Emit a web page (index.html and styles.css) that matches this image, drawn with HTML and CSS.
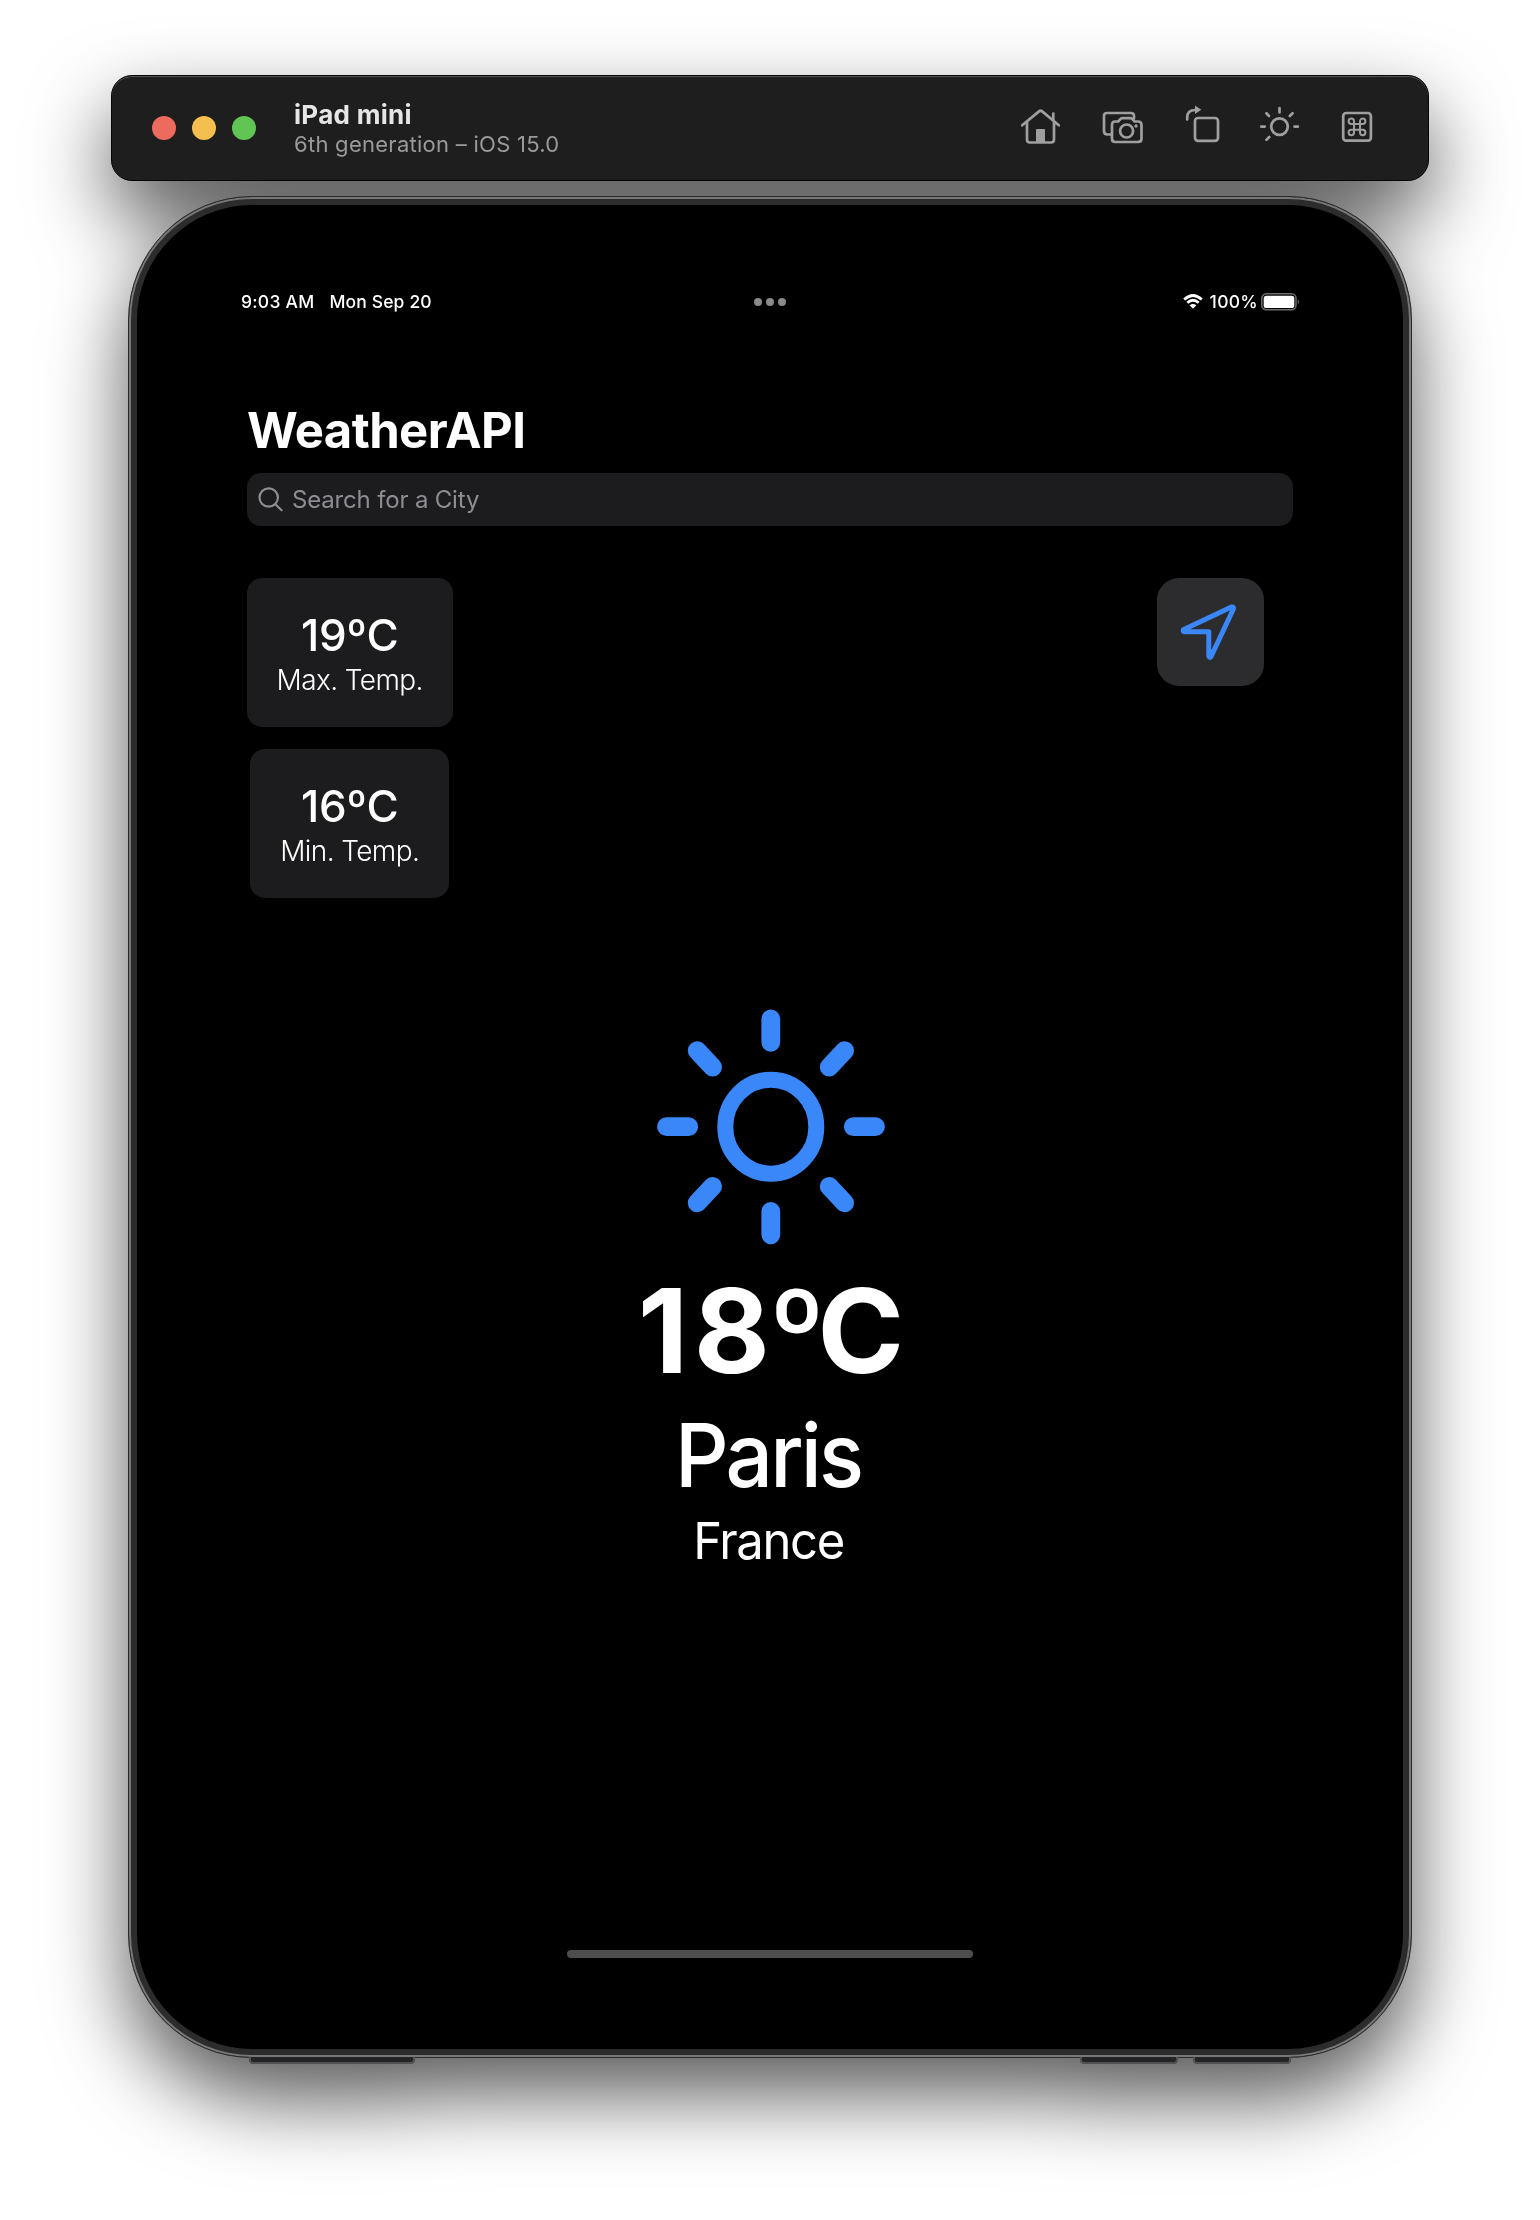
FILE: index.html
```html
<!DOCTYPE html>
<html lang="en">
<head>
<meta charset="utf-8">
<title>WeatherAPI</title>
<link rel="stylesheet" href="styles.css">
</head>
<body>
<div class="simulator">
  <header class="toolbar">
    <div class="lights">
      <span class="light light-close"></span>
      <span class="light light-min"></span>
      <span class="light light-max"></span>
    </div>
    <div class="window-title">
      <div class="device-name"><span>iPad mini</span></div>
      <div class="device-os"><span>6th generation – iOS 15.0</span></div>
    </div>
    <div class="tools">
      <svg class="tool" width="41" height="40" viewBox="1020 108 41 40">
        <path d="M1022.2 125.3 1039 111.4q1.6-1.3 3.2 0l16.6 13.9M1027 121.5v18q0 3 3 3h21q3 0 3-3v-18M1053.3 120v-6.5"/>
        <path class="solid" d="M1036 130q0-1 1-1h7q1 0 1 1v13h-9z"/>
      </svg>
      <svg class="tool" width="42" height="40" viewBox="1102 108 42 40">
        <path d="M1111 134.500h-3.500q-3.500 0-3.500-3.500v-15q0-3 3-3h24q3 0 3 3v2.500"/>
        <path d="M1115 121.500h3.200l2.400-2.600q.8-.8 2-.8h7.600q1.200 0 2 .8l2.400 2.600h3.400q3.500 0 3.500 3.500v13.500q0 3.500-3.500 3.500h-23q-3 0-3-3.500v-13.500q0-3.500 3-3.500z"/>
        <circle cx="1126.600" cy="131" r="6.500"/>
        <circle class="solid" cx="1136" cy="126" r="1.700"/>
      </svg>
      <svg class="tool" width="34" height="40" viewBox="1185 108 34 40">
        <rect x="1195" y="118" width="23" height="22.800" rx="3"/>
        <path d="M1187.200 119.500v-2q0-7.500 8-7.500"/>
        <path class="solid" d="M1195 105.500 1201.300 109.800 1195 114z"/>
      </svg>
      <svg class="tool" width="40" height="40" viewBox="1260 108 40 40">
        <circle cx="1279.500" cy="126.600" r="8.300"/>
        <path d="M1279.500 112.500v-4.500M1289.800 116l2.800-2.700M1294.500 126.600h3.400M1269.300 137l-2.900 2.900M1264.800 126.600h-3.600M1269 116l-2.600-2.700"/>
      </svg>
      <svg class="tool" width="32" height="40" viewBox="1341 108 32 40">
        <rect x="1343.200" y="113" width="27.700" height="27.700" rx="3"/>
        <path class="thin" d="M1354 124v-2.700a2.700 2.700 0 1 0-2.700 2.700h11.400a2.700 2.700 0 1 0-2.700-2.700v11.200a2.700 2.700 0 1 0 2.700-2.700h-11.400a2.700 2.700 0 1 0 2.700 2.700z"/>
      </svg>
    </div>
  </header>

  <div class="device">
    <i class="key key-power"></i>
    <i class="key key-down"></i>
    <i class="key key-up"></i>
    <div class="screen">
      <div class="status">
        <div class="status-side"><span class="clock">9:03 AM</span><span class="date">Mon Sep 20</span></div>
        <div class="dots"><i></i><i></i><i></i></div>
        <div class="status-side status-right">
          <svg class="wifi" width="20" height="15" viewBox="0 0 20 15">
            <path d="M1.200 5.600Q10-2.600 18.800 5.600M4.300 8.700q5.700-5 11.400 0"/>
            <path class="dot" d="M6.600 11.300q3.400-2.700 6.800 0L10 14.800z"/>
          </svg>
          <span class="percent">100%</span>
          <svg class="battery" width="40" height="18" viewBox="0 0 40 18">
            <rect class="shell" x=".8" y=".8" width="34.200" height="16" rx="4.500"/>
            <rect class="charge" x="2.700" y="2.800" width="30.600" height="12.200" rx="2.600"/>
            <path class="cap" d="M36.800 6q2.400 2.900 0 5.800z"/>
          </svg>
        </div>
      </div>

      <h1 class="title"><span>WeatherAPI</span></h1>
      <div class="search">
        <svg width="26" height="26" viewBox="0 0 26 26"><circle cx="10.700" cy="10.500" r="9.200"/><path d="M17.400 17.200 23.600 23.200"/></svg>
        <span>Search for a City</span>
      </div>

      <div class="panel">
        <div class="cards">
          <div class="card card-max"><div class="value"><span>19ºC</span></div><div class="label"><span>Max. Temp.</span></div></div>
          <div class="card card-min"><div class="value"><span>16ºC</span></div><div class="label"><span>Min. Temp.</span></div></div>
        </div>
        <div class="locate">
          <svg width="107" height="108" viewBox="1156.500 578 107 108"><path d="M1182.800 629.800q-.7 2 1.500 2h24v24.500q1 2.200 2.400 0l22.200-47.300q.6-2.600-2-2z"/></svg>
        </div>
      </div>

      <div class="hero">
        <svg class="sun" width="232" height="236" viewBox="654 1009 232 236">
          <ellipse cx="770.800" cy="1126.700" rx="45.500" ry="47"/>
          <path class="rays" d="M770.800 1018.800v23.500M770.800 1211.500v23.300M666.500 1126.700h22.200M853.300 1126.700h22.200M697.200 1050.700l15.400 16.500M844.600 1050.700l-15.400 16.500M697.200 1202.900l15.400-16.500M844.600 1202.900l-15.400-16.500"/>
        </svg>
        <div class="temp"><span><span class="tens">1</span>8<span class="degree">º</span>C</span></div>
        <div class="city"><span>Paris</span></div>
        <div class="country"><span>France</span></div>
      </div>
      <div class="home-bar"></div>
    </div>
  </div>
</div>
</body>
</html>
```
FILE: styles.css
```css
* { box-sizing: border-box; }

body {
  margin: 0;
  background: #fff;
  font-family: Inter, "Liberation Sans", sans-serif;
  color: #fff;
}

span { white-space: nowrap; }

.simulator {
  height: 2220px;
  padding-top: 75px;
  display: flex;
  flex-direction: column;
  align-items: center;
  gap: 15px;
  filter: drop-shadow(0 36px 40px rgba(0, 0, 0, .65));
}

/* simulator title bar */
.toolbar {
  width: 1318px;
  height: 106px;
  padding: 0 55px 0 40px;
  display: flex;
  align-items: center;
  border: 1px solid #050505;
  border-radius: 21px;
  background: #1e1e1e;
  box-shadow: inset 0 1px 0 #555;
}
.lights { display: flex; gap: 16px; }
.light { width: 24px; height: 24px; border-radius: 50%; }
.light-close { background: #ed6a5e; }
.light-min { background: #f5bf4f; }
.light-max { background: #61c554; }
.window-title { margin-left: 38px; flex: 1; padding-top: 3px; }
.device-name { font-size: 26px; line-height: 30px; font-weight: 700; color: #e6e6e6; letter-spacing: .3px; }
.device-os { font-size: 22px; line-height: 29px; color: #9a9a9a; letter-spacing: .27px; }
.tools { display: flex; gap: 41px; align-items: center; }
.tool { overflow: visible; fill: none; stroke: #9f9f9f; stroke-width: 2.700; stroke-linecap: round; stroke-linejoin: round; }
.tool .solid { fill: #9f9f9f; stroke: none; }
.tool .thin { stroke-width: 2; }

/* tablet body: rim, bezel, glass */
.device {
  position: relative;
  width: 1284px;
  height: 1862px;
  padding: 8px;
  border: 1px solid #2b2b2b;
  border-radius: 124px;
  background: #2c2c2c;
  box-shadow: inset 0 0 0 2px #777;
}
.screen {
  height: 100%;
  padding: 76px 110px 91px;
  border-radius: 115px;
  background: #000;
  display: flex;
  flex-direction: column;
}
.key {
  position: absolute;
  top: 1860px;
  height: 7px;
  background: #242426;
  border: 2px solid #505050;
  border-top: 0;
  border-radius: 0 0 4px 4px;
}
.key-power { left: 120px; width: 166px; }
.key-down { left: 951px; width: 98px; }
.key-up { left: 1064px; width: 98px; }

.status {
  height: 40px;
  display: grid;
  grid-template-columns: 1fr auto 1fr;
  align-items: center;
  font-size: 17.500px;
  font-weight: 500;
  margin: 0 -8px 0 -6px;
}
.status-side { display: flex; align-items: center; }
.status-right { justify-content: flex-end; }
.clock { letter-spacing: .25px; }
.date { margin-left: 15px; letter-spacing: .15px; }
.percent { letter-spacing: .3px; }
.dots { display: flex; gap: 4px; margin: 2px 2px 0 0; }
.dots i { width: 8px; height: 8px; border-radius: 50%; background: #8a8a8a; }
.wifi { fill: none; stroke: #fff; stroke-width: 2.800; margin-right: 7px; }
.wifi .dot { fill: #fff; stroke: none; }
.battery { margin: 1px 0 0 3px; }
.shell { fill: none; stroke: #6b6b6b; stroke-width: 1.500; }
.charge { fill: #fff; }
.cap { fill: #6b6b6b; }

.title { margin: 80px 0 0; font-size: 49px; line-height: 60px; font-weight: 700; letter-spacing: -.6px; }
.search {
  margin-top: 12px;
  height: 53px;
  padding-left: 11px;
  display: flex;
  align-items: center;
  gap: 8px;
  border-radius: 14px;
  background: #1c1c1e;
  color: #8d8d93;
  font-size: 24px;
  letter-spacing: -.17px;
}
.search svg { fill: none; stroke: #8d8d93; stroke-width: 2.200; stroke-linecap: round; }

.panel { margin-top: 52px; padding-right: 29.500px; display: flex; justify-content: space-between; align-items: flex-start; }
.cards { display: flex; flex-direction: column; align-items: center; gap: 22px; }
.card { height: 149px; padding-top: 35px; border-radius: 15px; background: #1c1c1e; text-align: center; }
.card-max { width: 205.500px; }
.card-min { width: 199px; }
.value { font-size: 44px; line-height: 44px; font-weight: 500; letter-spacing: -.3px; }
.label { font-size: 28px; line-height: 46px; font-weight: 300; letter-spacing: -.6px; }
.locate { width: 107px; height: 107.500px; border-radius: 22px; background: #2c2c2e; }
.locate svg { display: block; fill: none; stroke: #3a87fa; stroke-width: 5; stroke-linejoin: round; }

.hero { margin-top: 111px; display: flex; flex-direction: column; align-items: center; }
.sun { fill: none; stroke: #3a87fa; stroke-width: 16; }
.rays { stroke-width: 18.800; stroke-linecap: round; }
.temp { margin-top: 26px; font-size: 117px; line-height: 120px; font-weight: 700; letter-spacing: -1.700px; }
.tens { letter-spacing: 5.500px; }
.degree { font-weight: 800; letter-spacing: -8.500px; }
.city { margin: 19px 3px 0 0; font-size: 88px; line-height: 90px; font-weight: 500; letter-spacing: -2.900px; transform: scaleX(.95); }
.country { margin: 11px 3px 0 0; font-size: 51px; line-height: 60px; letter-spacing: -1.400px; transform: scaleX(.96); }
.home-bar { width: 406px; height: 8px; margin: auto auto 0; border-radius: 4px; background: #4d4d4d; }
```
